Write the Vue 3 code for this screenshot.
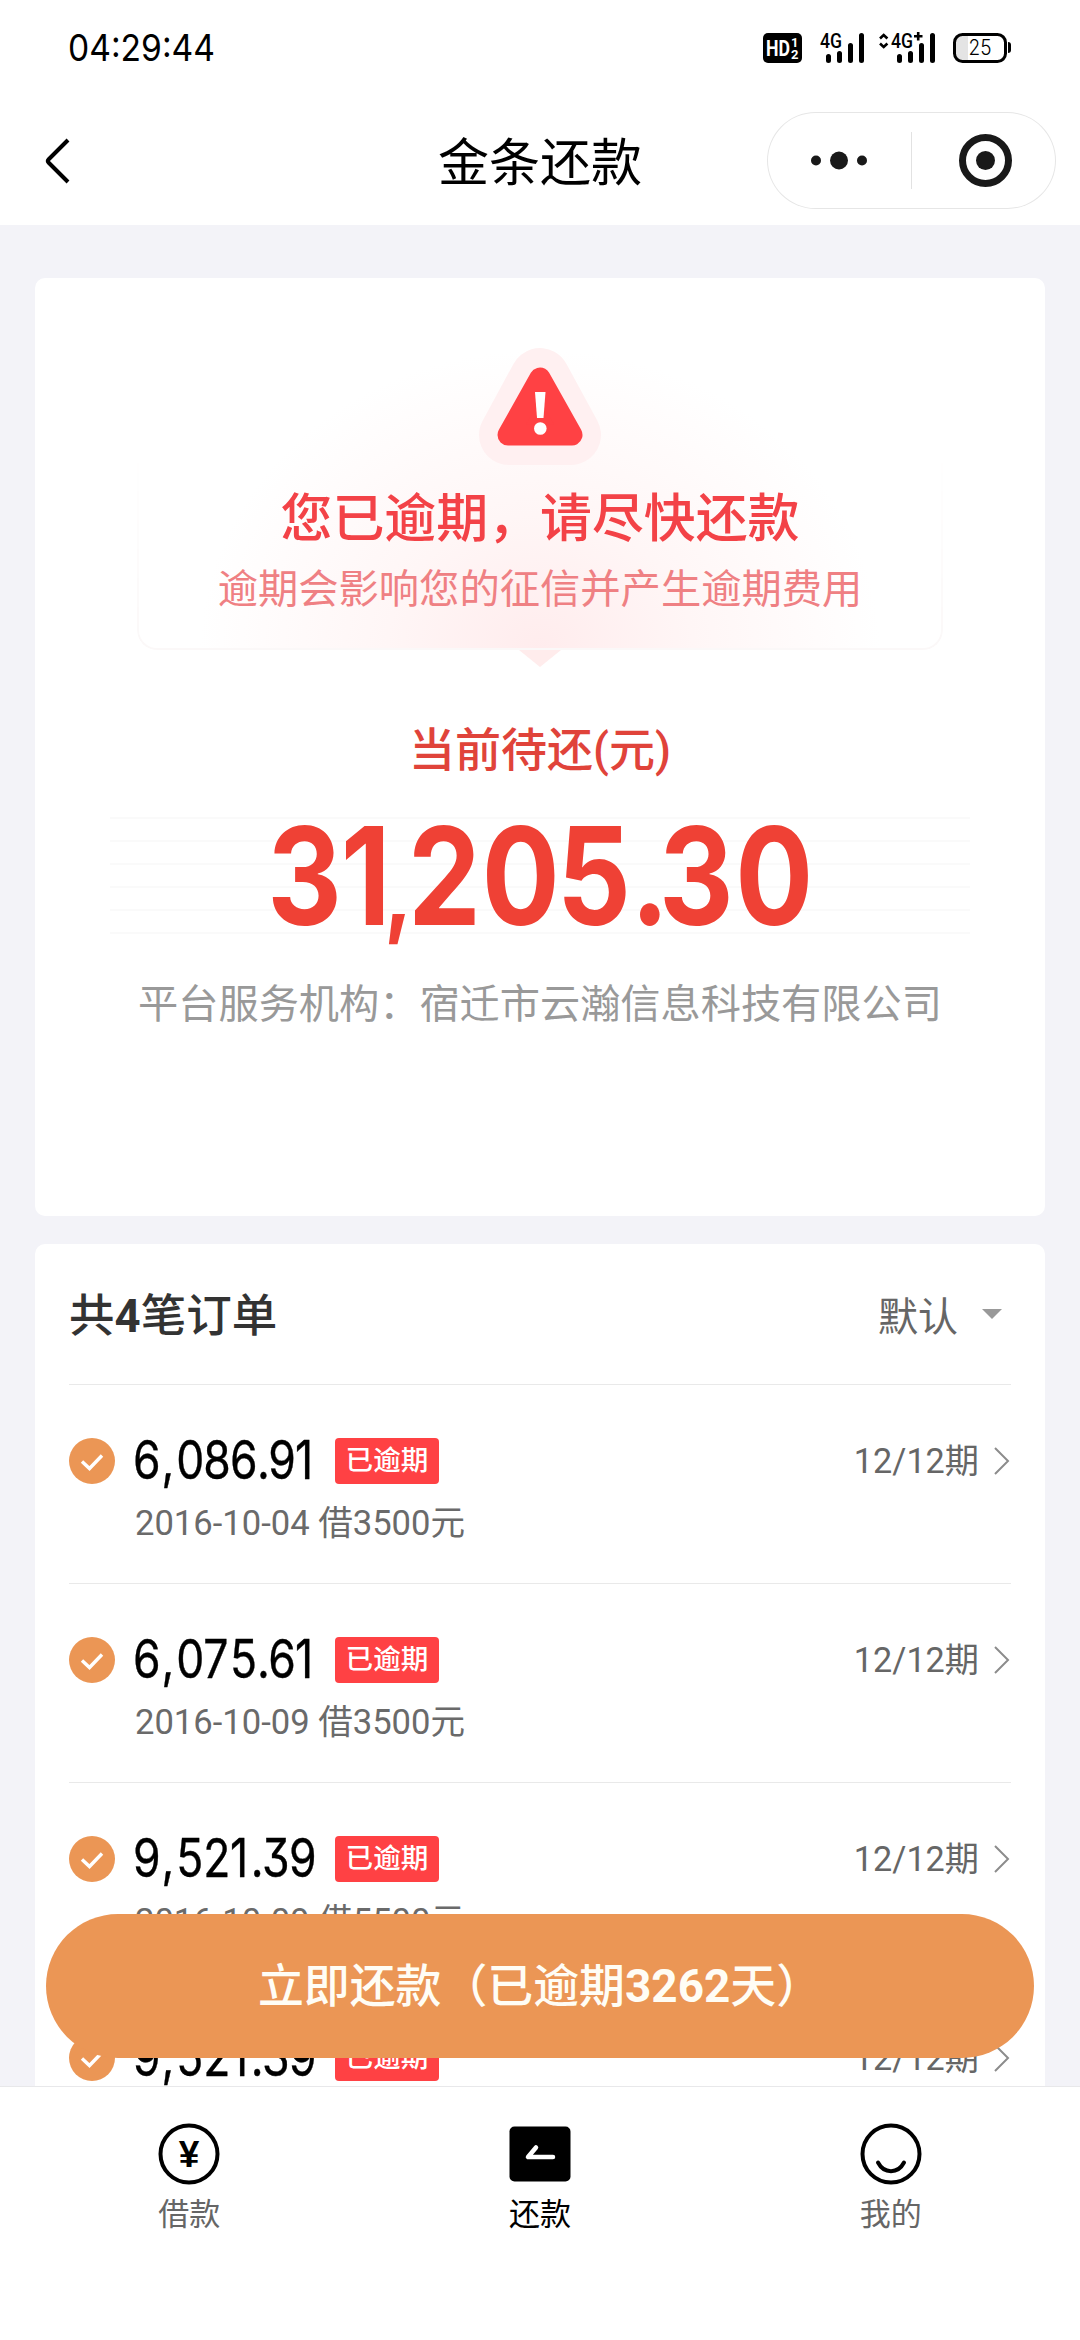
<script setup>
import { ref } from "vue";

const orders = ref([
  { id: 1, amount: "6,086.91", date: "2016-10-04", loan: 3500 },
  { id: 2, amount: "6,075.61", date: "2016-10-09", loan: 3500 },
  { id: 3, amount: "9,521.39", date: "2016-10-09", loan: 5500 },
  { id: 4, amount: "9,521.39", date: "2016-10-09", loan: 5500 },
]);

const overdueDays = ref(3262);
const activeTab = ref("repay");

const tabs = [
  { key: "borrow", label: "借款" },
  { key: "repay", label: "还款" },
  { key: "mine", label: "我的" },
];

// 金额字体偏窄，逐字排布
const AMOUNT_SCALE = 0.84;
const advance = { ",": 16.3, ".": 11.3, 1: 20.8 };

const amountX = (amount) => {
  let x = 0;
  return amount
    .split("")
    .map((ch) => {
      const pos = (x + (ch === "," ? 1.5 : 0)) / AMOUNT_SCALE;
      x += advance[ch] ?? 26.9;
      return pos.toFixed(1);
    })
    .join(" ");
};
</script>

<template>
  <div class="page">
    <div class="status">
      <svg class="clock" width="160" height="40" viewBox="0 0 160 40">
        <text x="0" y="33" textLength="147" lengthAdjust="spacingAndGlyphs">04:29:44</text>
      </svg>
      <svg class="signals" width="260" height="40" viewBox="760 28 260 40">
        <!-- HD -->
        <rect x="763" y="33" width="39" height="30" rx="5" />
        <text class="hd" x="766" y="56" font-size="22" textLength="24" lengthAdjust="spacingAndGlyphs">HD</text>
        <text class="hd" x="791" y="47" font-size="13">1</text>
        <text class="hd" x="791" y="58.5" font-size="13">2</text>
        <!-- 卡1 -->
        <text class="net" x="820" y="48" textLength="22" lengthAdjust="spacingAndGlyphs">4G</text>
        <path class="bar" d="M828.5 56.5v4M839.5 53.5v7M850.5 45.5v15M861.5 35.5v25" />
        <!-- 卡2 -->
        <path class="thin" d="M880 38.5l3.7-3.5 3.7 3.5M880 43.5l3.7 3.5 3.7-3.5" />
        <text class="net" x="891" y="48" textLength="22" lengthAdjust="spacingAndGlyphs">4G</text>
        <path class="thin" d="M914 36.3h8.5M918.2 32v8.5" />
        <path class="bar" d="M899.5 56.5v4M910.5 53.5v7M921.5 45.5v15M932.5 35.5v25" />
        <!-- 电池 -->
        <rect x="956" y="36" width="12" height="24" fill="#e4e4e4" />
        <rect x="954.5" y="34.5" width="51" height="27" rx="8" fill="none" stroke="#000" stroke-width="3" />
        <path d="M1008 42q3 0 3 3v5q0 3-3 3z" />
        <text class="level" x="968.5" y="55" textLength="23" lengthAdjust="spacingAndGlyphs">25</text>
      </svg>
    </div>

    <header class="nav">
      <svg class="back" width="28" height="50" viewBox="0 0 28 50">
        <path d="M24 4L4.500 23.500q-1.500 1.500 0 3L24 46" />
      </svg>
      <h1>金条还款</h1>
      <div class="capsule">
        <svg width="289" height="97" viewBox="0 0 289 97">
          <circle cx="49" cy="48.5" r="5" />
          <circle cx="72" cy="48.5" r="9" />
          <circle cx="95" cy="48.5" r="5" />
          <path d="M144.500 20v57" stroke="#e2e2e2" stroke-width="1" />
          <circle cx="218.5" cy="48.5" r="23" fill="none" stroke="#191919" stroke-width="7" />
          <circle cx="218.5" cy="48.5" r="9.5" />
        </svg>
      </div>
    </header>

    <main class="content">
      <section class="card summary">
        <div class="alert">
          <svg class="warn" width="126" height="118" viewBox="0 0 126 118">
            <path d="M63 30L94 87H32z" fill="#fff0f1" stroke="#fff0f1" stroke-width="60" stroke-linejoin="round" />
            <path d="M63 30L95 87H31z" fill="#ff4144" stroke="#ff4144" stroke-width="21" stroke-linejoin="round" />
            <path d="M58 44h10.500l-2 26h-6.500z" fill="#fff" />
            <circle cx="63.3" cy="80.5" r="6.3" fill="#fff" />
          </svg>
          <h2>您已逾期，请尽快还款</h2>
          <p>逾期会影响您的征信并产生逾期费用</p>
        </div>
        <div class="label">当前待还(元)</div>
        <div class="total">
          <svg width="560" height="120" viewBox="0 0 560 120">
            <text transform="scale(0.85 1)" y="108">
              <tspan x="8.5 95">31</tspan><tspan class="comma" x="146">,</tspan><tspan x="174 261 349.5 436 469.5 559">205.30</tspan>
            </text>
          </svg>
        </div>
        <div class="org">平台服务机构：宿迁市云瀚信息科技有限公司</div>
      </section>

      <section class="card orders">
        <div class="orders-head">
          <h3>共<b>{{ orders.length }}</b>笔订单</h3>
          <div class="sort">
            默认
            <svg width="20" height="10" viewBox="0 0 20 10"><path d="M0 0h20L10 10z" fill="#999" /></svg>
          </div>
        </div>
        <div v-for="order in orders" :key="order.id" class="order">
          <svg class="check" width="46" height="46" viewBox="0 0 46 46">
            <circle cx="23" cy="23" r="23" fill="#eb9655" />
            <path d="M13 23.500l7.500 7L33 17.500" fill="none" stroke="#fff" stroke-width="3.400" />
          </svg>
          <div class="info">
            <div class="row">
              <svg class="amount" width="190" height="64" viewBox="0 0 190 64">
                <text :transform="`scale(${AMOUNT_SCALE} 1)`" :x="amountX(order.amount)" y="49.5">{{ order.amount }}</text>
              </svg>
              <span class="tag">已逾期</span>
            </div>
            <div class="date">{{ order.date }} 借{{ order.loan }}元</div>
          </div>
          <div class="period">
            <span>12/12期</span>
            <svg width="18" height="30" viewBox="0 0 18 30">
              <path d="M2 2l13 13L2 28" fill="none" stroke="#8c8c8c" stroke-width="2" />
            </svg>
          </div>
        </div>
      </section>

      <button class="pay" type="button">立即还款（已逾期<b>{{ overdueDays }}</b>天）</button>
    </main>

    <footer class="tabs">
      <div
        v-for="tab in tabs"
        :key="tab.key"
        class="tab"
        :class="{ active: tab.key === activeTab }"
        @click="activeTab = tab.key"
      >
        <svg v-if="tab.key === 'borrow'" width="62" height="62" viewBox="0 0 62 62">
          <circle cx="31" cy="31" r="28.5" class="line" />
          <text class="yen" x="31" y="44" text-anchor="middle">¥</text>
        </svg>
        <svg v-else-if="tab.key === 'repay'" width="62" height="62" viewBox="0 0 62 62">
          <rect x="0.5" y="3.5" width="61" height="55" rx="5" />
          <path d="M27 24.500L19 34h25" fill="none" stroke="#fff" stroke-width="4.500" stroke-linecap="round" stroke-linejoin="round" />
        </svg>
        <svg v-else width="62" height="62" viewBox="0 0 62 62">
          <circle cx="31" cy="31" r="28.5" class="line" />
          <path d="M18 39.500c6 11.500 20 11.500 26 0" class="line" stroke-linecap="round" />
        </svg>
        <span>{{ tab.label }}</span>
      </div>
    </footer>
  </div>
</template>

<style>
body {
  margin: 0;
  background: #fff;
}
</style>

<style scoped>
.page {
  width: 1080px;
  height: 2340px;
  display: flex;
  flex-direction: column;
  overflow: hidden;
  background: #fff;
  font-family: Roboto, "Noto Sans CJK SC", sans-serif;
}

svg {
  display: block;
  flex-shrink: 0;
  overflow: visible;
}

h1,
h2,
h3,
p {
  margin: 0;
}

b {
  font-weight: 700;
}

.status {
  height: 96px;
  box-sizing: border-box;
  display: flex;
  justify-content: space-between;
  align-items: flex-start;
  padding: 28px 60px 0 68px;
}

.clock text {
  font: 400 37px Inter, sans-serif;
}

.signals .hd {
  fill: #fff;
  font-family: Roboto, sans-serif;
  font-weight: 700;
}

.signals .net {
  font: 500 20px Roboto, sans-serif;
}

.signals .level {
  font: 300 21px Inter, sans-serif;
}

.signals .bar {
  stroke: #000;
  stroke-width: 5;
  stroke-linecap: round;
}

.signals .thin {
  fill: none;
  stroke: #000;
  stroke-width: 2.6;
}

.nav {
  height: 129px;
  display: grid;
  grid-template-columns: 269px 1fr 289px;
  align-items: center;
  padding: 0 24px 0 44px;
}

.back path {
  fill: none;
  stroke: #000;
  stroke-width: 4;
}

.nav h1 {
  padding-top: 6px;
  font-size: 51px;
  line-height: 60px;
  font-weight: 400;
  text-align: center;
  color: #000;
}

.capsule {
  box-sizing: border-box;
  width: 289px;
  height: 97px;
  border-radius: 49px;
  box-shadow: inset 0 0 0 1px #e6e6e6;
  fill: #191919;
}

.content {
  position: relative;
  flex: 1;
  min-height: 0;
  overflow: hidden;
  background: #f3f3f8;
  padding: 53px 35px 0;
  display: flex;
  flex-direction: column;
  gap: 28px;
}

.card {
  flex-shrink: 0;
  border-radius: 10px;
  background: #fff;
}

.summary {
  height: 938px;
  display: flex;
  flex-direction: column;
  align-items: center;
}

.alert {
  position: relative;
  width: 806px;
  height: 302px;
  margin-top: 70px;
  display: flex;
  flex-direction: column;
  align-items: center;
  border-radius: 20px;
  background: radial-gradient(ellipse 340px 300px at 50% 100%, #ffeced 0%, #fff6f6 45%, #fff 100%);
}

.alert::before {
  content: "";
  position: absolute;
  inset: 100px 0 0;
  border: 2px solid #fbf8f8;
  border-top: 0;
  border-radius: 0 0 20px 20px;
  -webkit-mask: linear-gradient(transparent, #000);
  mask: linear-gradient(transparent, #000);
}

.alert::after {
  content: "";
  position: absolute;
  top: 100%;
  left: 50%;
  transform: translateX(-50%);
  border: 21px solid transparent;
  border-top: 17px solid #ffecec;
  border-bottom: 0;
}

.alert h2 {
  margin-top: 24px;
  font-size: 51.9px;
  line-height: 60px;
  font-weight: 500;
  color: #f34247;
  white-space: nowrap;
}

.alert p {
  margin-top: 14px;
  font-size: 40.3px;
  line-height: 52px;
  color: #ef8083;
  white-space: nowrap;
}

.label {
  margin-top: 73px;
  font-size: 46px;
  line-height: 54px;
  font-weight: 500;
  color: #e0433a;
}

.total {
  width: 860px;
  height: 117px;
  margin-top: 40px;
  display: flex;
  justify-content: center;
  background: repeating-linear-gradient(#fafafa 0 2px, transparent 2px 23px);
}

.total text {
  font: 700 136px Inter, sans-serif;
  fill: #ef4135;
}

.total .comma {
  font-size: 100px;
}

.org {
  margin-top: 43px;
  font-size: 40.2px;
  line-height: 56px;
  color: #999;
  white-space: nowrap;
}

.orders {
  padding: 0 34px;
}

.orders-head {
  height: 140px;
  display: flex;
  align-items: center;
  justify-content: space-between;
  padding-right: 9px;
}

.orders-head h3 {
  padding-bottom: 4px;
  font-size: 45.5px;
  font-weight: 500;
  color: #333;
}

.sort {
  display: flex;
  align-items: center;
  gap: 24px;
  font-size: 40px;
  color: #666;
}

.order {
  height: 199px;
  box-sizing: border-box;
  border-top: 1px solid #e9e9e9;
  padding-top: 53px;
  display: flex;
  align-items: flex-start;
}

.info {
  margin-left: 18px;
  flex: 1;
}

.row {
  height: 46px;
  display: flex;
  align-items: center;
}

.amount text {
  font: 400 53px Inter, sans-serif;
  font-feature-settings: "cv09";
  stroke: #000;
  stroke-width: 0.4;
}

.tag {
  margin-left: 12px;
  width: 104px;
  height: 46px;
  border-radius: 4px;
  background: #ff4144;
  color: #fff;
  font-size: 27.6px;
  line-height: 46px;
  font-weight: 500;
  text-align: center;
}

.date {
  margin: 19px 0 0 2px;
  font-size: 34.6px;
  line-height: 40px;
  color: #6a6a6a;
}

.period {
  height: 46px;
  display: flex;
  align-items: center;
  gap: 14px;
  font-size: 34.2px;
  color: #666;
}

.period span {
  padding-bottom: 6px;
}

.pay {
  position: absolute;
  left: 46px;
  right: 46px;
  bottom: 28px;
  height: 144px;
  border: 0;
  border-radius: 72px;
  background: #eb9655;
  color: #fffdf5;
  font-family: inherit;
  font-size: 45.9px;
  font-weight: 500;
  padding: 0 0 9px;
}

.tabs {
  height: 254px;
  box-sizing: border-box;
  border-top: 1px solid #e8e8ea;
  display: flex;
  align-items: flex-start;
  padding: 36px 14px 0;
}

.tab {
  flex: 1;
  display: flex;
  flex-direction: column;
  align-items: center;
  gap: 10px;
  font-size: 31px;
  line-height: 40px;
  color: #666;
}

.tab.active {
  color: #000;
}

.tab .line {
  fill: none;
  stroke: #000;
  stroke-width: 4;
}

.yen {
  font: 700 37px "Liberation Sans", sans-serif;
}
</style>
